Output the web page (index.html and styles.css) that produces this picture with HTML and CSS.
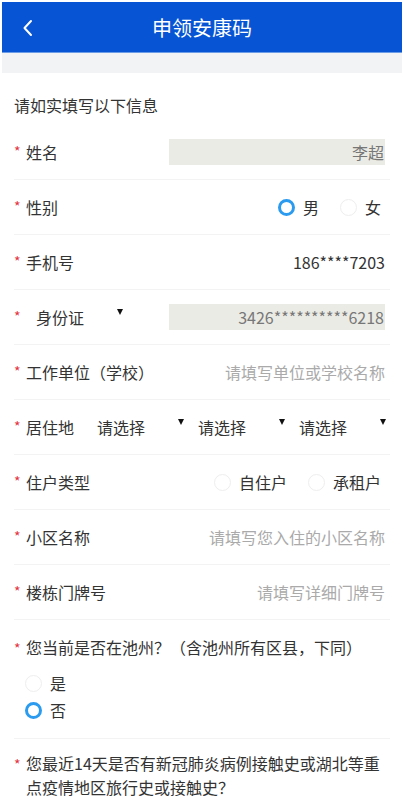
FILE: index.html
```html
<!DOCTYPE html>
<html lang="zh-CN">
<head>
  <meta charset="UTF-8" />
  <meta name="viewport" content="width=device-width, initial-scale=1.0"/>
  <title>申领安康码</title>
  <link rel="stylesheet" href="styles.css">
</head>
<body>
  <div class="page">
    <!-- Top bar -->
    <div class="header">
      <svg class="back" width="12" height="18" viewBox="0 0 12 18">
        <path d="M9 2 L2.5 9 L9 16" fill="none" stroke="#fff" stroke-width="2" stroke-linecap="round" stroke-linejoin="round"/>
      </svg>
      <span class="header-title">申领安康码</span>
    </div>
    <div class="strip"></div>

    <div class="form">
      <div class="intro">请如实填写以下信息</div>

      <div class="row">
        <div class="label"><span class="req">*</span>姓名</div>
        <div class="box">李超</div>
      </div>

      <div class="row">
        <div class="label"><span class="req">*</span>性别</div>
        <div class="options">
          <span class="option"><span class="radio checked"></span>男</span>
          <span class="option"><span class="radio"></span>女</span>
        </div>
      </div>

      <div class="row">
        <div class="label"><span class="req">*</span>手机号</div>
        <div class="value">186****7203</div>
      </div>

      <div class="row">
        <div class="label"><span class="req">*</span><span class="select id-type">身份证<i class="caret"></i></span></div>
        <div class="box">3426**********6218</div>
      </div>

      <div class="row">
        <div class="label"><span class="req">*</span>工作单位（学校）</div>
        <div class="value placeholder">请填写单位或学校名称</div>
      </div>

      <div class="row">
        <div class="label"><span class="req">*</span>居住地</div>
        <div class="selects">
          <span class="select area">请选择<i class="caret"></i></span>
          <span class="select area">请选择<i class="caret"></i></span>
          <span class="select area">请选择<i class="caret"></i></span>
        </div>
      </div>

      <div class="row">
        <div class="label"><span class="req">*</span>住户类型</div>
        <div class="options">
          <span class="option"><span class="radio"></span>自住户</span>
          <span class="option"><span class="radio"></span>承租户</span>
        </div>
      </div>

      <div class="row">
        <div class="label"><span class="req">*</span>小区名称</div>
        <div class="value placeholder">请填写您入住的小区名称</div>
      </div>

      <div class="row">
        <div class="label"><span class="req">*</span>楼栋门牌号</div>
        <div class="value placeholder">请填写详细门牌号</div>
      </div>

      <div class="question">
        <div class="q-title"><span class="req">*</span><span>您当前是否在池州？（含池州所有区县，下同）</span></div>
        <div class="q-options">
          <span class="option"><span class="radio"></span>是</span>
          <span class="option"><span class="radio checked"></span>否</span>
        </div>
      </div>

      <div class="question last">
        <div class="q-title"><span class="req">*</span><span>您最近14天是否有新冠肺炎病例接触史或湖北等重点疫情地区旅行史或接触史？</span></div>
      </div>
    </div>
  </div>
</body>
</html>
```

FILE: styles.css
```css
/* Base reset */
* {
  box-sizing: border-box;
  margin: 0;
  padding: 0;
}

body {
  font-family: "Noto Sans CJK SC", "Noto Sans", sans-serif;
  background: #fff;
  color: #333;
  padding: 2px;
}

.page {
  width: 400px;
  background: #fff;
}

/* Top bar */
.header {
  position: relative;
  height: 51px;
  background-color: #0755d4;
  border-bottom: 1px solid #6d9ce6;
  display: flex;
  align-items: center;
  justify-content: center;
}

.back {
  position: absolute;
  left: 20px;
  top: 17px;
}

.header-title {
  color: #fff;
  font-size: 20px;
}

.strip {
  height: 20px;
  background-color: #f1f3f5;
}

/* Form */
.form {
  padding: 0 12px;
}

.intro {
  font-size: 16px;
  line-height: 24px;
  padding: 20px 0 8px;
}

.row {
  display: flex;
  align-items: center;
  height: 55px;
  padding-right: 5px;
  border-bottom: 1px solid #f3f3f3;
  font-size: 16px;
}

.label {
  display: flex;
  align-items: center;
  flex-shrink: 0;
}

.req {
  display: inline-block;
  width: 12px;
  flex-shrink: 0;
  color: #e3343f;
  font-size: 14px;
  position: relative;
  top: -1px;
}

.value {
  margin-left: auto;
  text-align: right;
}

.placeholder {
  color: #aaa;
}

.box {
  margin-left: auto;
  width: 216px;
  height: 26px;
  line-height: 26px;
  background-color: #ebebe5;
  color: #777;
  text-align: right;
  padding-right: 1px;
}

/* Radios */
.options {
  margin-left: auto;
  margin-right: 4px;
  display: flex;
  gap: 21px;
}

.option {
  display: flex;
  align-items: center;
  gap: 8px;
}

.radio {
  display: inline-block;
  width: 17px;
  height: 17px;
  border-radius: 50%;
  border: 1px solid #eeeeee;
}

.radio.checked {
  border: 3px solid #2b9bf0;
}

/* Selects */
.select {
  display: inline-flex;
  align-items: center;
}

.caret {
  display: inline-block;
  width: 0;
  height: 0;
  margin-left: 33px;
  border-left: 3px solid transparent;
  border-right: 3px solid transparent;
  border-top: 6px solid #111;
  position: relative;
  top: -5px;
}

.id-type {
  padding-left: 10px;
  width: 143px;
}

.selects {
  display: flex;
  margin-left: 23px;
}

.area {
  width: 101px;
}

/* Questions */
.question {
  font-size: 16px;
  line-height: 24px;
  padding: 15px 0 16px;
  border-bottom: 1px solid #f3f3f3;
}

.question.last {
  border-bottom: none;
  padding-top: 12px;
}

.q-title {
  display: flex;
  padding-right: 10px;
}

.q-title .req {
  top: 1px;
}

.q-options {
  display: flex;
  flex-direction: column;
  gap: 3px;
  padding: 12px 0 0 11px;
}
```
